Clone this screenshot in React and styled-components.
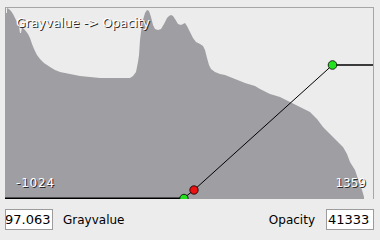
import React from "react";
import styled, { createGlobalStyle } from "styled-components";

const Global = createGlobalStyle`
  html, body { margin: 0; padding: 0; background: #ececec; }
  body { width: 380px; height: 236px; overflow: hidden; font-family: "DejaVu Sans", "Liberation Sans", sans-serif; }
`;

const Page = styled.div`
  width: 380px;
  height: 236px;
  box-sizing: border-box;
  padding: 7px 6px 0 5px;
  background: #ececec;
`;

const Frame = styled.div`
  position: relative;
  height: 192px;
  box-sizing: border-box;
  border-top: 1px solid #a6a6a6;
  border-right: 1px solid #a6a6a6;
`;

const Chart = styled.svg`
  display: block;
  width: 368px;
  height: 191px;
`;

const Caption = styled.span`
  position: absolute;
  font-size: ${(p) => p.$size || 12}px;
  letter-spacing: ${(p) => p.$ls || 0}px;
  line-height: 14px;
  color: #ffffff;
  text-shadow: 1px 1px 0 #2a2a2a;
  white-space: nowrap;
  ${(p) => (p.$left !== undefined ? `left: ${p.$left}px;` : "")}
  ${(p) => (p.$right !== undefined ? `right: ${p.$right}px;` : "")}
  ${(p) => (p.$top !== undefined ? `top: ${p.$top}px;` : "")}
  ${(p) => (p.$bottom !== undefined ? `bottom: ${p.$bottom}px;` : "")}
`;

const Row = styled.div`
  display: flex;
  align-items: center;
  margin-top: 10px;
  height: 21px;
`;

const Field = styled.div`
  width: 48px;
  height: 21px;
  box-sizing: border-box;
  border: 1px solid #9c9c9c;
  background: #ffffff;
  overflow: hidden;
  display: flex;
  align-items: center;
  font-size: 13px;
  color: #000;
  white-space: nowrap;
`;

const FieldText = styled.span`
  margin-left: ${(p) => p.$indent}px;
`;

const Label = styled.span`
  font-size: 12px;
  color: #000;
  margin-left: ${(p) => p.$ml || 0}px;
  margin-right: ${(p) => p.$mr || 0}px;
`;

const Spacer = styled.div`
  flex: 1;
`;

const histogram =
  "M5,199 L5,8 L6,8 L6,13 L7,13 L7,8 L9,9 L11,11 L13,14 L15,18 L17,22 L19,26 L20,33 L21,33 L22,27 L25,30 L28,34 L30,38 L32,44 L34,49 L37,55 L40,59 L44,63 L50,67 L55,70 L60,72 L70,74 L80,76 L90,77 L100,78 L130,78 L133,76 L136,72 L138,62 L139,55 L140,40 L141,32 L143,20 L145,13 L147,10 L149,11 L151,17 L153,25 L155,29 L158,30 L161,29 L164,24 L167,18 L169,16 L171,15 L173,16 L175,19 L178,24 L181,25 L183,24 L185,23 L187,26 L189,30 L191,34 L193,38 L196,42 L200,44 L203,46 L205,50 L207,58 L209,65 L211,69 L215,72 L220,74 L225,75 L235,79 L245,83 L255,86 L260,89 L270,94 L280,97 L290,102 L300,107 L310,112 L317,119 L323,127 L330,134 L337,141 L343,147 L347,154 L350,162 L355,170 L357,176 L360,185 L362,190 L364,197 L364,199 Z";

export default function App() {
  return (
    <>
      <Global />
      <Page>
        <Frame>
          <Chart viewBox="5 8 368 191" preserveAspectRatio="none">
            <path d={histogram} fill="#9f9ea3" />
            <line x1="5" y1="198.3" x2="184" y2="198.3" stroke="#000" strokeWidth="1.5" />
            <polyline
              points="184,198 194,190 332.5,65"
              fill="none"
              stroke="#000"
              strokeWidth="1"
            />
            <line x1="332.5" y1="65" x2="374" y2="65" stroke="#000" strokeWidth="1.4" />
            <circle cx="184" cy="198.5" r="4.2" fill="#22e01e" stroke="#000" strokeWidth="0.8" />
            <circle cx="194" cy="190" r="4.2" fill="#ee1111" stroke="#000" strokeWidth="0.8" />
            <circle cx="332.5" cy="65" r="4.3" fill="#22e01e" stroke="#000" strokeWidth="0.8" />
          </Chart>
          <Caption $left={11} $top={8} $size={12.4}>Grayvalue -&gt; Opacity</Caption>
          <Caption $left={11} $bottom={9} $ls={0.8}>-1024</Caption>
          <Caption $right={7} $bottom={9}>1359</Caption>
        </Frame>
        <Row>
          <Field>
            <FieldText $indent={-1}>97.063</FieldText>
          </Field>
          <Label $ml={10}>Grayvalue</Label>
          <Spacer />
          <Label $mr={11}>Opacity</Label>
          <Field>
            <FieldText $indent={1}>41333</FieldText>
          </Field>
        </Row>
      </Page>
    </>
  );
}
